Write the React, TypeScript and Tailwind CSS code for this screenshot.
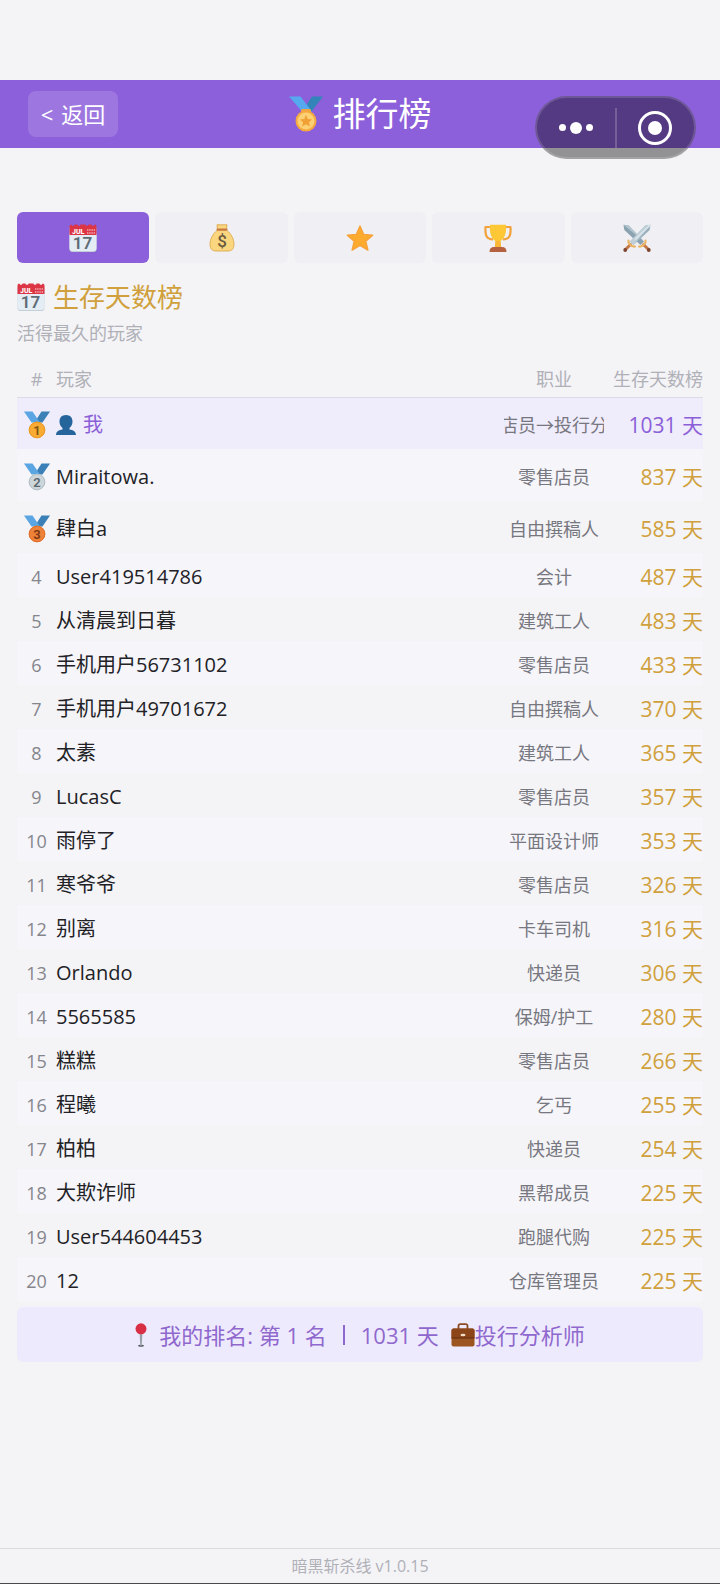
import { clsx } from "clsx";
import type { ReactNode } from "react";

interface IconProps {
  className?: string;
}

interface Player {
  name: string;
  job: string;
  days: number;
  me?: boolean;
}

const players: Player[] = [
  { name: "我", job: "零售店员→投行分析师", days: 1031, me: true },
  { name: "Miraitowa.", job: "零售店员", days: 837 },
  { name: "肆白a", job: "自由撰稿人", days: 585 },
  { name: "User419514786", job: "会计", days: 487 },
  { name: "从清晨到日暮", job: "建筑工人", days: 483 },
  { name: "手机用户56731102", job: "零售店员", days: 433 },
  { name: "手机用户49701672", job: "自由撰稿人", days: 370 },
  { name: "太素", job: "建筑工人", days: 365 },
  { name: "LucasC", job: "零售店员", days: 357 },
  { name: "雨停了", job: "平面设计师", days: 353 },
  { name: "寒爷爷", job: "零售店员", days: 326 },
  { name: "别离", job: "卡车司机", days: 316 },
  { name: "Orlando", job: "快递员", days: 306 },
  { name: "5565585", job: "保姆/护工", days: 280 },
  { name: "糕糕", job: "零售店员", days: 266 },
  { name: "程曦", job: "乞丐", days: 255 },
  { name: "柏柏", job: "快递员", days: 254 },
  { name: "大欺诈师", job: "黑帮成员", days: 225 },
  { name: "User544604453", job: "跑腿代购", days: 225 },
  { name: "12", job: "仓库管理员", days: 225 },
];

function CalendarIcon({ className }: IconProps) {
  return (
    <svg viewBox="0 0 28 28" className={className} aria-hidden="true">
      <rect x="0.5" y="2" width="27" height="26" rx="3" fill="#c3ced6" />
      <path d="M.5 9h27v15a3 3 0 0 1-3 3h-21a3 3 0 0 1-3-3z" fill="#e4edf3" />
      <path
        d="M.5 11V2.500a2 2 0 0 1 2-2c0 1.800 3 1.800 3 0h3c0 1.800 3 1.800 3 0h5c0 1.800 3 1.800 3 0h3c0 1.800 3 1.800 3 0a2 2 0 0 1 2 2V11z"
        fill="#dc3545"
      />
      <text
        x="3"
        y="9.500"
        fontSize="7"
        fontWeight="800"
        fill="#fff"
        fontFamily="Roboto, sans-serif"
      >
        JUL
      </text>
      <path
        d="M18 6h8M18 9h8"
        stroke="#f4a9b0"
        strokeWidth="1.500"
        strokeDasharray="1.400 .8"
      />
      <text
        x="13.500"
        y="25"
        textAnchor="middle"
        fontSize="17"
        fontWeight="600"
        fill="#5f6b75"
        fontFamily="Roboto, sans-serif"
      >
        17
      </text>
    </svg>
  );
}

function MoneyBagIcon({ className }: IconProps) {
  return (
    <svg viewBox="0 0 28 28" className={className} aria-hidden="true">
      <path
        d="M9 .8h10L18.500 6c4.500 3.500 7.500 9 7.500 14.500 0 4.500-2.500 6.500-6 6.500H8c-3.500 0-6-2-6-6.500C2 15 5 9.500 9.500 6z"
        fill="#fad67f"
        stroke="#dca94c"
        strokeWidth=".9"
        strokeLinejoin="round"
      />
      <rect x="8.500" y="4.500" width="11" height="2.200" rx="1.100" fill="#c9793f" />
      <text
        x="14"
        y="23"
        textAnchor="middle"
        fontSize="17"
        fontWeight="500"
        fill="#6b5b3e"
        fontFamily="Roboto, sans-serif"
      >
        $
      </text>
    </svg>
  );
}

function StarIcon({ className }: IconProps) {
  return (
    <svg viewBox="0 0 28 28" className={className} aria-hidden="true">
      <path
        d="M14 2l3.600 8.400 9.100.8-6.900 6 2.100 8.900L14 21.400l-7.900 4.700 2.100-8.900-6.900-6 9.100-.8z"
        fill="#fdab2f"
        stroke="#f7a23a"
        strokeWidth="1.400"
        strokeLinejoin="round"
      />
    </svg>
  );
}

function TrophyIcon({ className }: IconProps) {
  return (
    <svg viewBox="0 0 28 28" className={className} aria-hidden="true">
      <path
        d="M7 3H1.500c-.3 4.500 0 8 1.500 10 1.300 2 3.500 2.300 6 2.500M21 3h5.500c.3 4.500 0 8-1.500 10-1.300 2-3.500 2.300-6 2.500"
        fill="none"
        stroke="#f2a23c"
        strokeWidth="2.200"
        strokeLinejoin="round"
      />
      <path
        d="M6 .8h16c.6 7-.5 13-5.500 16.400l.7 6.300h-6.400l.7-6.300C6.500 13.800 5.400 7.800 6 .8z"
        fill="#fdc736"
      />
      <path d="M11.600 17h4.800l.8 6.500h-6.400z" fill="#f9b637" />
      <path d="M5.500 28c0-3.500 1.500-5 4.500-5h8c3 0 4.500 1.500 4.500 5z" fill="#b5603f" />
    </svg>
  );
}

function SwordsIcon({ className }: IconProps) {
  return (
    <svg viewBox="0 0 28 28" className={className} aria-hidden="true">
      <path d="M.5.8l.8 5.200L17.500 21l3.500-3.500L5.700 1.500z" fill="#8ba3b1" />
      <path d="M.5.8L21 17.500 5.700 1.500z" fill="#b4c6d0" />
      <path d="M27.500.8l-.8 5.200L10.500 21 7 17.500 22.300 1.500z" fill="#9aafbb" />
      <path d="M27.500.8L10.500 21 7 17.500 22.300 1.500z" fill="#c0d0d9" />
      <path d="M27.500.8L12 15.500" stroke="#dce7ed" strokeWidth="1.500" />
      <path
        d="M7.500 20.500L2.500 25.500M20.500 20.500l5 5"
        stroke="#c47848"
        strokeWidth="3"
        strokeLinecap="round"
      />
      <path
        d="M5.500 16.500c-.5 2 0 2.500 1.500 4 1.500 1.500 3 2.500 5 2M22.500 16.500c.5 2 0 2.500-1.500 4-1.500 1.500-3 2.500-5 2"
        fill="none"
        stroke="#e9b565"
        strokeWidth="2.200"
        strokeLinecap="round"
      />
      <circle cx="2.200" cy="26" r="1.900" fill="#7d4430" />
      <circle cx="25.800" cy="26" r="1.900" fill="#7d4430" />
    </svg>
  );
}

function SportsMedalIcon({ className }: IconProps) {
  return (
    <svg viewBox="0 0 34 36" className={className} aria-hidden="true">
      <path d="M23 .5h11L22.500 15.500 14 14z" fill="#3384b8" />
      <path d="M0 .5h11.500L23 15.500h-10z" fill="#56a9ef" />
      <rect x="12" y="13" width="10" height="4" rx="1.500" fill="#f2a53d" />
      <circle cx="17" cy="25" r="10.500" fill="#f5a83f" />
      <circle cx="17" cy="25" r="8.500" fill="#fdd073" />
      <path
        d="M17 19l1.800 4 4.300.4-3.200 2.900 1 4.200-3.900-2.200-3.900 2.200 1-4.200-3.200-2.900 4.300-.4z"
        fill="#f0a035"
      />
    </svg>
  );
}

const medalFills = ["#f9ab33", "#cbd5da", "#ef8239"];
const medalRings = ["#e59a2b", "#b3bfc6", "#dd6f2b"];
const medalInks = ["#7c5310", "#5c676e", "#7a3712"];

function RankMedalIcon({ rank }: { rank: number }) {
  return (
    <svg viewBox="0 0 26 28" className="mx-auto h-7 w-[26px]" role="img">
      <title>{`第 ${rank} 名`}</title>
      <path d="M17.500.5H26L18.500 11.500h-8z" fill="#3b80b6" />
      <path d="M0 .5h8.500L16 11.500H7.500z" fill="#5aa5e2" />
      <circle cx="13" cy="19" r="8.300" fill={medalFills[rank - 1]} />
      <circle
        cx="13"
        cy="19"
        r="7.800"
        fill="none"
        stroke={medalRings[rank - 1]}
      />
      <text
        x="13"
        y="23.600"
        textAnchor="middle"
        fontSize="13"
        fontWeight="600"
        fill={medalInks[rank - 1]}
        fontFamily="Roboto, sans-serif"
      >
        {rank}
      </text>
    </svg>
  );
}

function PersonIcon({ className }: IconProps) {
  return (
    <svg viewBox="0 0 20 20" className={className} aria-hidden="true">
      <path
        d="M10 0c4.200 0 6.500 2.800 6.500 6.500 0 2.700-1.200 5-3 6.400v1.600c3.500.5 6.300 1.700 6.500 5.500H0c.2-3.800 3-5 6.500-5.500v-1.600c-1.800-1.400-3-3.700-3-6.400C3.500 2.800 5.800 0 10 0z"
        fill="#25659b"
      />
    </svg>
  );
}

function PinIcon({ className }: IconProps) {
  return (
    <svg viewBox="0 0 12 24" className={className} aria-hidden="true">
      <ellipse cx="6" cy="22.800" rx="3" ry="1" fill="#4c5358" />
      <path d="M4.500 9h3L6.700 23H5.300z" fill="#98a1a8" />
      <circle cx="6" cy="5.800" r="5.500" fill="#d92f45" />
    </svg>
  );
}

function BriefcaseIcon({ className }: IconProps) {
  return (
    <svg viewBox="0 0 24 24" className={className} aria-hidden="true">
      <path
        d="M7.500 6V3a1.800 1.800 0 0 1 1.800-1.800h5.400A1.800 1.800 0 0 1 16.500 3v3"
        fill="none"
        stroke="#8a4b22"
        strokeWidth="1.800"
      />
      <rect x=".5" y="5.500" width="23" height="18" rx="2" fill="#9c5421" />
      <path d="M.5 15V7.500a2 2 0 0 1 2-2h19a2 2 0 0 1 2 2V15z" fill="#8b4518" />
      <path d="M.5 15h23" stroke="#5e2f13" />
      <ellipse cx="12" cy="12" rx="2.500" ry="1.300" fill="#f0dfc8" />
    </svg>
  );
}

const tabs: { label: string; icon: ReactNode }[] = [
  { label: "生存天数榜", icon: <CalendarIcon className="size-7" /> },
  { label: "财富榜", icon: <MoneyBagIcon className="size-7" /> },
  { label: "声望榜", icon: <StarIcon className="size-7" /> },
  { label: "成就榜", icon: <TrophyIcon className="size-7" /> },
  { label: "战斗榜", icon: <SwordsIcon className="size-7" /> },
];

function Capsule() {
  return (
    <div className="absolute top-4 right-6 flex h-[63px] w-[161px] items-center rounded-full border-2 border-white/15 bg-black/40">
      <button
        type="button"
        aria-label="更多"
        className="flex h-full flex-1 items-center justify-center gap-1"
      >
        <span className="size-[7px] rounded-full bg-white" />
        <span className="size-3 rounded-full bg-white" />
        <span className="size-[7px] rounded-full bg-white" />
      </button>
      <span className="h-10 w-0.5 bg-white/20" />
      <button
        type="button"
        aria-label="关闭"
        className="flex h-full flex-1 items-center justify-center"
      >
        <span className="flex size-[34px] items-center justify-center rounded-full border-[3px] border-white">
          <span className="size-3.5 rounded-full bg-white" />
        </span>
      </button>
    </div>
  );
}

function PlayerRow({ player, rank }: { player: Player; rank: number }) {
  return (
    <tr
      className={clsx(
        rank <= 3 ? "h-[52px]" : "h-11",
        player.me ? "bg-[#efecfb]" : rank % 2 === 0 && "bg-[#f5f5fa]"
      )}
    >
      <td className="pt-1 text-center text-lg text-[#85858c]">
        {rank <= 3 ? <RankMedalIcon rank={rank} /> : rank}
      </td>
      <td
        className={clsx(
          "pt-1 text-[20px]",
          player.me ? "text-[#8b5fd8]" : "text-[#222226]"
        )}
      >
        <div className="flex items-center gap-[7px]">
          {player.me && <PersonIcon className="size-5" />}
          {player.name}
        </div>
      </td>
      <td className="pt-1 text-lg text-[#77777f]">
        <div className="flex justify-center overflow-hidden whitespace-nowrap">
          {player.job}
        </div>
      </td>
      <td
        className={clsx(
          "pt-1 text-right text-[21px] whitespace-nowrap",
          player.me ? "text-[#8b5fd8]" : "text-[#d0a03c]"
        )}
      >
        {player.days} 天
      </td>
    </tr>
  );
}

export default function App() {
  return (
    <div className="flex min-h-screen flex-col border-b border-[#4a4a4e] bg-[#f4f4f7] pt-20 font-['Open_Sans','Noto_Sans_CJK_SC',sans-serif] leading-7">
      <header className="relative grid h-[68px] grid-cols-[1fr_auto_1fr] items-center bg-[#8c60da] px-7 text-white">
        <button
          type="button"
          className="flex h-[46px] w-[90px] items-center justify-center gap-2 rounded-lg bg-white/15 text-[22px]"
        >
          <span>&lt;</span>
          <span>返回</span>
        </button>
        <h1 className="flex items-center gap-2.5 text-[33px]">
          <SportsMedalIcon className="h-9 w-[34px]" />
          排行榜
        </h1>
        <Capsule />
      </header>

      <main className="flex-1 px-[17px] pt-16">
        <nav className="grid grid-cols-5 gap-1.5">
          {tabs.map((tab, i) => (
            <button
              key={tab.label}
              type="button"
              aria-label={tab.label}
              className={clsx(
                "flex h-[51px] items-center justify-center rounded-md",
                i === 0 ? "bg-[#8c60da]" : "bg-[#f0f0f4]"
              )}
            >
              {tab.icon}
            </button>
          ))}
        </nav>

        <h2 className="mt-5 flex items-center gap-2 text-[26px] text-[#d0a03c]">
          <CalendarIcon className="size-7" />
          生存天数榜
        </h2>
        <p className="mt-2 text-lg/7 text-[#b0b0b7]">活得最久的玩家</p>

        <table className="mt-3.5 w-full table-fixed border-collapse">
          <thead>
            <tr className="h-9 border-b border-[#dcdbe6] text-lg text-[#b0b0b7]">
              <th className="w-[39px] font-normal">#</th>
              <th className="text-left font-normal">玩家</th>
              <th className="w-[100px] font-normal">职业</th>
              <th className="w-[99px] text-right font-normal whitespace-nowrap">
                生存天数榜
              </th>
            </tr>
          </thead>
          <tbody>
            {players.map((player, i) => (
              <PlayerRow key={i} player={player} rank={i + 1} />
            ))}
          </tbody>
        </table>

        <div className="mt-1.5 flex h-[55px] items-center justify-center rounded-md bg-[#eeeafd] text-[22px] text-[#8f68ce]">
          <PinIcon className="mr-3 h-6 w-3" />
          <span>我的排名: 第 1 名</span>
          <span className="mx-4 h-5 w-0.5 bg-[#8f68ce]" />
          <span>1031 天</span>
          <BriefcaseIcon className="ml-3 size-6" />
          <span>投行分析师</span>
        </div>
      </main>

      <footer className="flex h-[35px] items-center justify-center border-t border-[#dcdce0] text-base text-[#b0b0b7]">
        暗黑斩杀线 v1.0.15
      </footer>
    </div>
  );
}
